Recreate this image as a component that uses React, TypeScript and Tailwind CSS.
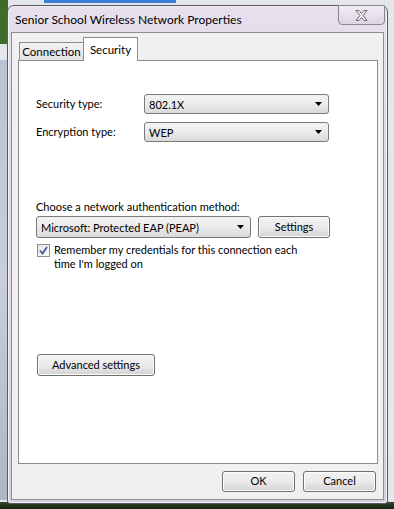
import React from "react";

const font = { fontFamily: 'Lato, "Noto Sans", sans-serif' };

function Combo({ value, className }: { value: string; className: string }) {
    return (
        <div
            className={`flex h-[20px] items-center justify-between rounded-[3px] border border-[#7a7a7a] bg-gradient-to-b from-[#f3f3f3] via-[#ebebeb] to-[#d9d9d9] pl-[4px] pr-[6px] text-[11px] text-black ${className}`}>
            <span className="leading-none">{value}</span>
            <svg width="7" height="4" viewBox="0 0 7 4">
                <path d="M0 0 H7 L3.5 4 Z" fill="#000" />
            </svg>
        </div>
    );
}

function Btn({ label, className }: { label: string; className: string }) {
    return (
        <button
            className={`flex items-center justify-center rounded-[3px] border border-[#707070] bg-gradient-to-b from-[#f2f2f2] via-[#ebebeb] to-[#d3d3d3] text-[11px] text-black shadow-[inset_0_0_0_1px_#fcfcfc] ${className}`}>
            {label}
        </button>
    );
}

export default function App() {
    return (
        <div className="relative h-[509px] w-[394px] overflow-hidden bg-[#e3e6ea] text-[11px]" style={font}>
            {/* stuff behind the dialog */}
            <div className="absolute left-0 top-0 h-[44px] w-[8px] bg-[#3f6b2a]" />
            <div className="absolute left-[44px] top-0 h-[3px] w-[132px] bg-[#3d7fd6]" />
            <div className="absolute left-0 top-[60px] h-[440px] w-[8px] bg-gradient-to-b from-[#b7c4d4] via-[#c9ced8] to-[#aeb6c3]" />
            <div className="absolute left-[388px] top-0 h-[500px] w-[6px] bg-[#e4e6ea]" />
            <div className="absolute bottom-0 left-0 h-[7px] w-full bg-gradient-to-b from-[#2e4a2a] to-[#14230f]" />

            <div className="absolute left-[7px] top-[5px] flex h-[499px] w-[381px] flex-col rounded-t-[7px] rounded-b-[3px] border border-[#5d5a66] bg-gradient-to-b from-[#e6dfee] via-[#dcd6e6] to-[#d4d0dc] px-[3px] pb-[3px] shadow-[inset_0_0_0_1px_#f4f0f8]">
                <div className="relative flex h-[26px] shrink-0 items-center pl-[4px] pt-[2px]">
                    <span className="text-[12px] leading-none text-black">
                        Senior School Wireless Network Properties
                    </span>
                    <div className="absolute right-[-1px] top-[-1px] flex h-[20px] w-[47px] items-center justify-center rounded-b-[4px] border border-[#8c8794] bg-gradient-to-b from-[#f0ecf4] to-[#dcd6e3]">
                        <svg width="13" height="11" viewBox="0 0 13 11">
                            <path
                                d="M1 0.5 H4 L6.5 3.5 L9 0.5 H12 L8 5.5 L12 10.5 H9 L6.5 7.5 L4 10.5 H1 L5 5.5 Z"
                                fill="#f8f8f8"
                                stroke="#6a6470"
                                strokeWidth="1"
                            />
                        </svg>
                    </div>
                </div>

                <div className="flex flex-1 flex-col border border-[#8e8c96] bg-[#f0f0f0] px-[6px]">
                    {/* tabs */}
                    <div className="flex h-[27px] items-end pl-[1px]">
                        <div className="mb-[-1px] flex h-[19px] w-[65px] items-center justify-center border border-b-0 border-[#8c8e94] bg-gradient-to-b from-[#f3f3f3] to-[#e2e2e2] text-[11.5px] text-black">
                            Connection
                        </div>
                        <div className="relative z-10 mb-[-1px] ml-[-1px] flex h-[24px] w-[55px] items-start justify-center border border-b-0 border-[#8c8e94] bg-white pt-[3px] text-[11.5px] text-black">
                            Security
                        </div>
                    </div>

                    <div className="flex h-[404px] w-[360px] flex-col border border-[#898c95] bg-white pl-[17px] text-black">
                        <div className="mt-[33px] flex items-center">
                            <span className="w-[108px]">Security type:</span>
                            <Combo value="802.1X" className="w-[185px]" />
                        </div>
                        <div className="mt-[8px] flex items-center">
                            <span className="w-[108px]">Encryption type:</span>
                            <Combo value="WEP" className="w-[185px]" />
                        </div>

                        <div className="mt-[57px] leading-[16px]">Choose a network authentication method:</div>
                        <div className="mt-[1px] flex gap-[7px]">
                            <Combo value="Microsoft: Protected EAP (PEAP)" className="h-[22px] w-[215px]" />
                            <Btn label="Settings" className="h-[22px] w-[72px]" />
                        </div>

                        <div className="mt-[5px] flex items-start gap-[4px] pl-[1px]">
                            <div className="mt-[1px] flex h-[13px] w-[13px] shrink-0 items-center justify-center border border-[#8e8f8f] bg-gradient-to-br from-[#e4e4e4] to-[#fbfbfb]">
                                <svg width="9" height="9" viewBox="0 0 9 9">
                                    <path d="M1 4.5 L3.5 7.5 L8 1" fill="none" stroke="#3a5fa8" strokeWidth="1.8" />
                                </svg>
                            </div>
                            <div className="leading-[14px]">
                                Remember my credentials for this connection each
                                <br />
                                time I'm logged on
                            </div>
                        </div>

                        <Btn label="Advanced settings" className="mt-[83px] ml-[1px] h-[22px] w-[118px]" />
                    </div>

                    <div className="flex flex-1 items-center justify-end gap-[8px] pr-[1px]">
                        <Btn label="OK" className="h-[21px] w-[73px]" />
                        <Btn label="Cancel" className="h-[21px] w-[73px]" />
                    </div>
                </div>
            </div>
        </div>
    );
}
